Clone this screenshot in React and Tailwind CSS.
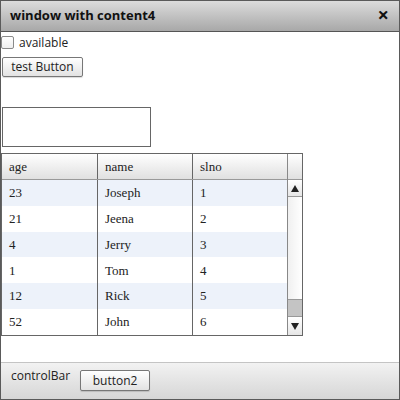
const rows = [
  { age: "23", name: "Joseph", slno: "1" },
  { age: "21", name: "Jeena", slno: "2" },
  { age: "4", name: "Jerry", slno: "3" },
  { age: "1", name: "Tom", slno: "4" },
  { age: "12", name: "Rick", slno: "5" },
  { age: "52", name: "John", slno: "6" },
];

const sans = "font-['Open_Sans',sans-serif]";
const serif = "font-['Liberation_Serif',serif]";

export default function App() {
  return (
    <div className={`w-[400px] h-[400px] flex flex-col border border-[#5a5a5a] bg-white text-[#222] ${sans}`}>
      {/* title bar */}
      <div className="h-[31px] shrink-0 flex items-center justify-between pl-[9px] pr-[10px] border-b border-[#555] bg-gradient-to-b from-[#dcdcdc] to-[#a8a8a8]">
        <span className="text-[13px] font-bold text-[#111]">window with content4</span>
        <span className="text-[20px] font-bold text-[#111] leading-none pb-[2px]">×</span>
      </div>

      {/* content */}
      <div className="flex-1 flex flex-col">
        <label className="flex items-center mt-[4px] h-[13px]">
          <span className="w-[13px] h-[13px] border border-[#8a8a8a] rounded-[2px] bg-gradient-to-b from-white to-[#eee]" />
          <span className="ml-[5px] text-[12px] text-[#222]">available</span>
        </label>
        <button className="mt-[8px] ml-[1px] w-[81px] h-[20px] border border-[#777] rounded-[2px] bg-gradient-to-b from-white to-[#e2e2e2] text-[12px] text-[#222] leading-none shadow-[0_1px_1px_rgba(0,0,0,0.15)]">
          test Button
        </button>
        <div className="mt-[30px] ml-[1px] w-[149px] h-[40px] border border-[#666]" />

        <div className={`mt-[6px] w-[302px] h-[183px] border border-[#666] flex ${serif}`}>
          <div className="flex-1 flex flex-col">
            <div className="h-[26px] flex border-b border-[#999] bg-gradient-to-b from-white to-[#e0e0e0] text-[13px] text-[#222]">
              <div className="w-[96px] border-r border-[#666] flex items-center pl-[7px]">age</div>
              <div className="w-[95px] border-r border-[#666] flex items-center pl-[7px]">name</div>
              <div className="flex-1 flex items-center pl-[7px]">slno</div>
            </div>
            {rows.map((r, i) => (
              <div key={r.slno} className={`h-[26px] flex text-[13px] text-[#222] ${i % 2 === 0 ? "bg-[#edf2fa]" : "bg-white"}`}>
                <div className="w-[96px] border-r border-[#666] flex items-center pl-[7px]">{r.age}</div>
                <div className="w-[95px] border-r border-[#666] flex items-center pl-[7px]">{r.name}</div>
                <div className="flex-1 flex items-center pl-[7px]">{r.slno}</div>
              </div>
            ))}
          </div>
          {/* scrollbar column */}
          <div className="w-[15px] border-l border-[#888] flex flex-col">
            <div className="h-[26px] border-b border-[#999] bg-gradient-to-b from-white to-[#e0e0e0]" />
            <div className="h-[17px] border-b border-[#999] bg-gradient-to-b from-white to-[#e6e6e6] flex items-center justify-center">
              <svg width="8" height="7" viewBox="0 0 8 7"><path d="M4 0 L8 7 L0 7 Z" fill="#222" /></svg>
            </div>
            <div className="flex-1 bg-gradient-to-r from-[#f0f0f0] to-white" />
            <div className="h-[18px] border-y border-[#999] bg-[#c4c4c4]" />
            <div className="h-[18px] bg-gradient-to-b from-white to-[#e6e6e6] flex items-center justify-center">
              <svg width="8" height="7" viewBox="0 0 8 7"><path d="M0 0 L8 0 L4 7 Z" fill="#222" /></svg>
            </div>
          </div>
        </div>
      </div>

      {/* control bar */}
      <div className="h-[37px] shrink-0 flex items-start border-t border-[#c4c4c4] bg-gradient-to-b from-[#f2f2f2] to-[#d6d6d6] pl-[10px]">
        <span className="mt-[4px] text-[12px] text-[#222]">controlBar</span>
        <button className="mt-[7px] ml-[10px] w-[70px] h-[21px] border border-[#777] rounded-[2px] bg-gradient-to-b from-white to-[#e2e2e2] text-[12px] text-[#222] leading-none shadow-[0_1px_1px_rgba(0,0,0,0.15)]">
          button2
        </button>
      </div>
    </div>
  );
}
